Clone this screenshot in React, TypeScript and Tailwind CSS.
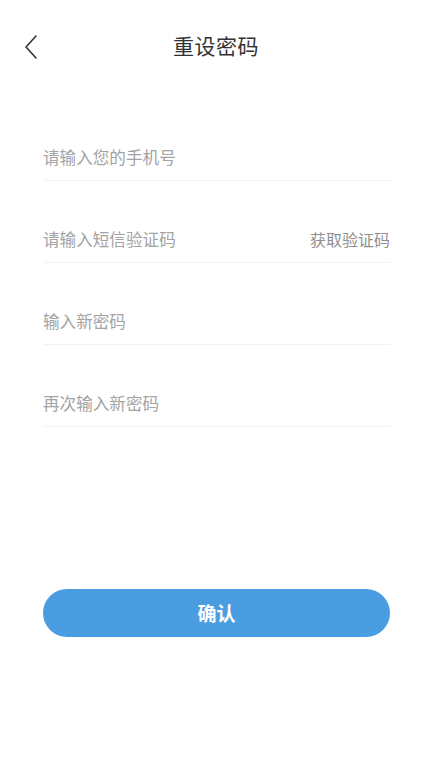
import React from "react";

const font = { fontFamily: '"Noto Sans CJK SC", "Noto Sans", sans-serif' };

const Field = ({ placeholder, action }: { placeholder: string; action?: string }) => (
  <div className="h-[82px] flex items-end border-b border-[#f2f2f2]">
    <div className="flex w-full items-center justify-between pb-[11px] leading-6">
      <span className="text-[16.6px] text-[#a3a3a3]">{placeholder}</span>
      {action && <span className="text-[16px] text-[#8f8f8f]">{action}</span>}
    </div>
  </div>
);

export default function App() {
  return (
    <div className="w-[428px] h-[762px] bg-white" style={font}>
      {/* Header */}
      <div className="relative h-[92px] flex items-center justify-center pl-[4px]">
        <svg
          className="absolute left-[22px] top-[34px]"
          width="18"
          height="26"
          viewBox="0 0 18 26"
          fill="none"
        >
          <path d="M14 2 L4 13 L14 24" stroke="#333" strokeWidth="1.6" strokeLinecap="round" strokeLinejoin="round" />
        </svg>
        <h1 className="text-[21px] text-[#333] font-normal tracking-[0.5px]">重设密码</h1>
      </div>

      {/* Form */}
      <div className="ml-[43px] w-[347px] mt-[7px] flex flex-col">
        <Field placeholder="请输入您的手机号" />
        <Field placeholder="请输入短信验证码" action="获取验证码" />
        <Field placeholder="输入新密码" />
        <Field placeholder="再次输入新密码" />

        <button className="mt-[162px] h-[48px] w-full rounded-full bg-[#4a9de1] text-white text-[19px] font-bold">
          确认
        </button>
      </div>
    </div>
  );
}
